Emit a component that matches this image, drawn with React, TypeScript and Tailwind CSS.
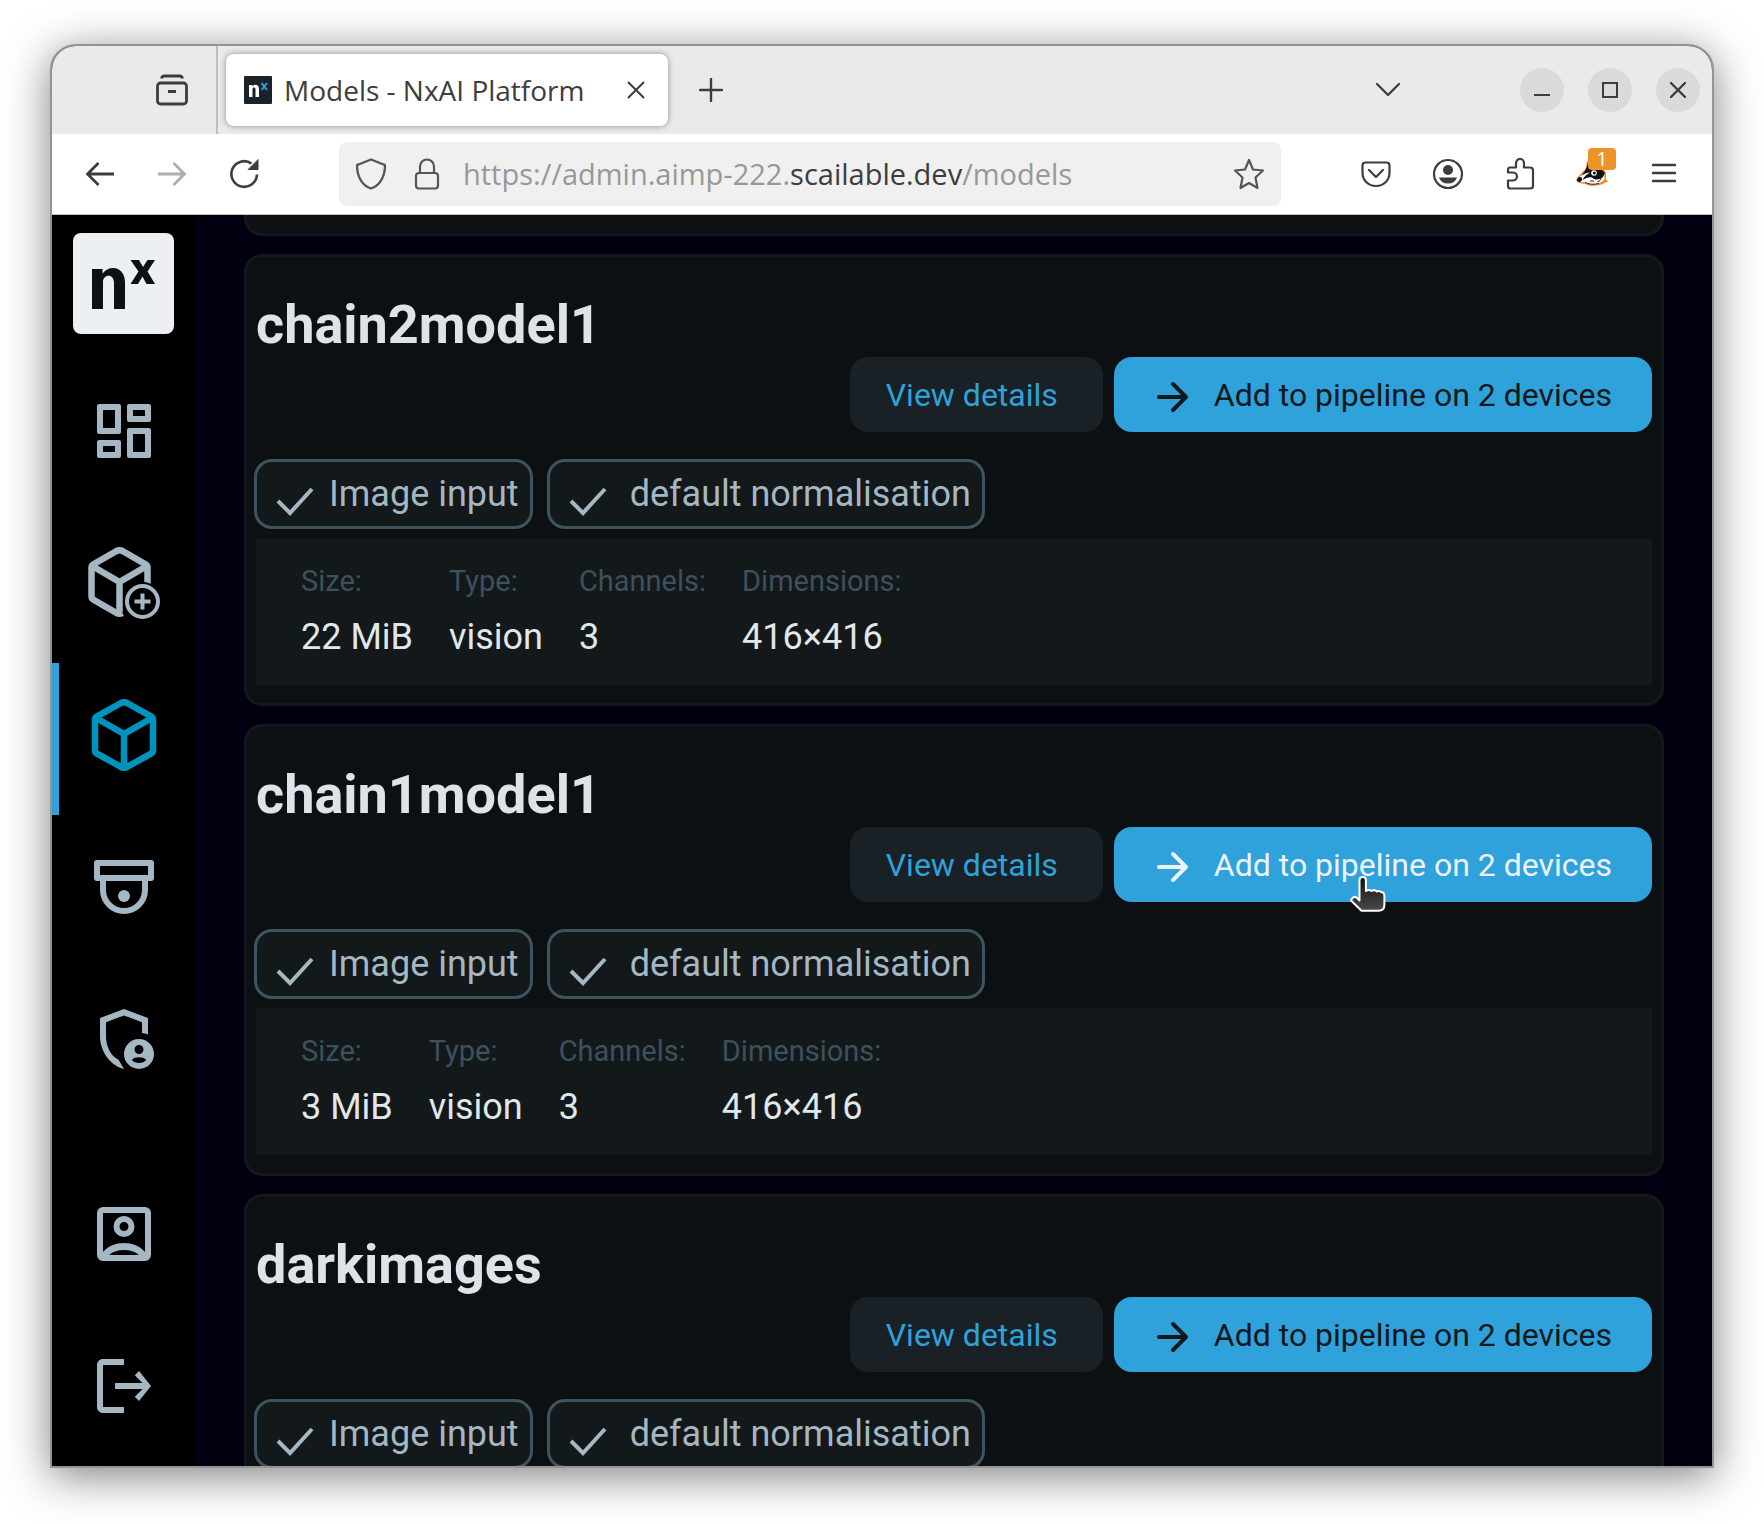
import React from "react";

type Model = { name: string; stats?: { label: string; value: string }[]; hovered?: boolean };

const models: Model[] = [
  {
    name: "chain2model1",
    stats: [
      { label: "Size", value: "22 MiB" },
      { label: "Type", value: "vision" },
      { label: "Channels", value: "3" },
      { label: "Dimensions", value: "416×416" },
    ],
  },
  {
    name: "chain1model1",
    hovered: true,
    stats: [
      { label: "Size", value: "3 MiB" },
      { label: "Type", value: "vision" },
      { label: "Channels", value: "3" },
      { label: "Dimensions", value: "416×416" },
    ],
  },
  { name: "darkimages" },
];

type IconProps = { className?: string; children: React.ReactNode; box?: string };

const Line = ({ className = "size-8", children, box = "0 0 32 32" }: IconProps) => (
  <svg viewBox={box} className={className} fill="none" stroke="currentColor" strokeWidth={2.2} strokeLinecap="round" strokeLinejoin="round" aria-hidden="true">
    {children}
  </svg>
);

const Solid = ({ className = "size-[72px]", children, box = "0 0 24 24" }: IconProps) => (
  <svg viewBox={box} className={className} fill="currentColor" aria-hidden="true">
    {children}
  </svg>
);

const Favicon = () => (
  <svg viewBox="0 0 28 28" className="size-7 shrink-0" aria-hidden="true">
    <rect width="28" height="28" rx="1" fill="#1a232a" />
    <path d="M5 21V9h3.500v1.500C10.500 7.500 15 8.500 15 12.500V21h-3.500v-7.800c0-2.200-3-2.200-3 0V21z" fill="#fff" />
    <path d="M17.500 7l5.500 7M23 7l-5.500 7" stroke="#2fa2db" strokeWidth="2" />
  </svg>
);

const TabStrip = () => (
  <header className="flex h-[88px] shrink-0 bg-[#eaeaea] text-[#3d3d3d]">
    <div className="flex w-[166px] items-center justify-end border-r-2 border-[#bfbfbf] pr-7">
      <button aria-label="Recent windows" className="flex">
        <Line className="size-8">
          <rect x="1.500" y="9" width="29" height="21" rx="3" strokeWidth={2.800} />
          <path d="M5.500 4.500q.5-2.500 3-2.500h15q2.500 0 3 2.500M12 17.500h8" strokeWidth={2.800} strokeLinecap="butt" />
        </Line>
      </button>
    </div>
    <div className="my-2 ml-2 flex w-[442px] items-center rounded-lg bg-white pl-[18px] shadow-[0_0_6px_rgba(0,0,0,0.4)]">
      <Favicon />
      <span className="ml-3 grow whitespace-nowrap text-[28px]">Models - NxAI Platform</span>
      <button aria-label="Close tab" className="mr-[22px] flex">
        <Line className="size-5" box="0 0 20 20"><path d="M2.500 2.500l15 15M17.500 2.500l-15 15" strokeWidth={2} /></Line>
      </button>
    </div>
    <button aria-label="New tab" className="ml-[31px] flex items-center">
      <Line className="size-6" box="0 0 24 24"><path d="M1 12h22M12 1v22" strokeWidth={2.400} /></Line>
    </button>
    <div className="ml-auto flex items-center pr-3">
      <button aria-label="List all tabs" className="mr-[120px] flex">
        <Line className="size-6" box="0 0 24 24"><path d="M1 6l11 11L23 6" strokeWidth={2.300} /></Line>
      </button>
      <div className="flex gap-6">
        <button aria-label="Minimize" className="flex size-11 items-center justify-center rounded-full bg-[#dadada]">
          <Line className="size-4" box="0 0 16 16"><path d="M0 13h16" strokeWidth={2} strokeLinecap="butt" /></Line>
        </button>
        <button aria-label="Maximize" className="flex size-11 items-center justify-center rounded-full bg-[#dadada]">
          <Line className="size-4" box="0 0 16 16"><path d="M1 1h14v14H1z" strokeWidth={2} strokeLinejoin="miter" /></Line>
        </button>
        <button aria-label="Close window" className="flex size-11 items-center justify-center rounded-full bg-[#dadada]">
          <Line className="size-4" box="0 0 16 16"><path d="M1 1l14 14M15 1L1 15" strokeWidth={2.400} /></Line>
        </button>
      </div>
    </div>
  </header>
);

const Badger = () => (
  <svg viewBox="0 0 32 26" className="h-[26px] w-8 shrink-0" aria-hidden="true">
    <path d="M0 20C3 15 8 11 10 8L11 1l6 3 9 3 4 6v6l2 3-3 .5C25 26 14 27 9 24l-6-1z" fill="#f28a1e" />
    <path d="M1.500 20C5 14.500 10 12 12 7l1-4 10 5 5.500 6v5C25 25 14 25.500 9 22.500l-6-1z" fill="#fff" />
    <path d="M5 15.500C9 12 11 8 12 2.500L16 7c5 0 10 2 13 6l-2 4c-3 3-8 3.500-11 .500-3-1-6 .500-9.500 2.500 2-4 5-6 7.500-7.500C11 12.500 8 14 5 15.500z" fill="#111" />
    <path d="M1.500 18.500c1-2 4-2 4.500 0s-1 3.500-3 3.500-2.500-2-1.500-3.500z" fill="#111" />
    <circle cx="18" cy="13" r="2.800" fill="#fff" />
    <circle cx="18.300" cy="13" r="1.500" fill="#111" />
    <path d="M9 22c3 2.500 10 3 14 1M25 18c0 2-1.500 3.500-3.500 3.500M14 21h4" stroke="#222" strokeWidth="1" fill="none" />
  </svg>
);

const Toolbar = () => (
  <nav className="flex h-[81px] shrink-0 items-center border-b border-[#c4c4c4] bg-white text-[#3d3d3d]">
    <div className="flex w-[287px] items-center gap-10 pl-8">
      <button aria-label="Back" className="flex">
        <Line><path d="M30 16H3M14.500 5L3.500 16l11 11" strokeWidth={2.800} strokeLinecap="butt" strokeLinejoin="miter" /></Line>
      </button>
      <button aria-label="Forward" className="flex text-[#adadad]">
        <Line><path d="M2 16h27M17.500 5l11 11-11 11" strokeWidth={2.800} strokeLinecap="butt" strokeLinejoin="miter" /></Line>
      </button>
      <button aria-label="Reload" className="flex">
        <Line>
          <path d="M29 16.500A12.800 12.800 0 1 1 23.500 5.500" strokeWidth={2.600} strokeLinecap="butt" />
          <path d="M30 2v9.500h-9.500z" fill="currentColor" stroke="currentColor" strokeWidth={1} />
        </Line>
      </button>
    </div>
    <div className="flex h-16 grow items-center rounded-lg bg-[#f0f0f0] pl-4 pr-4 text-[#555]">
      <Line><path d="M16 1.500l12.500 5c1 0 1.500 1 1.500 2C29.500 20 24 28 16 30.500 8 28 2.500 20 2 8.500c0-1 .500-2 1.500-2z" strokeWidth={2.300} /></Line>
      <Line className="ml-6 size-8">
        <rect x="5" y="15" width="22" height="15.500" rx="3" />
        <path d="M9 15V8.500a7 7 0 0 1 14 0V15" />
      </Line>
      <div className="relative ml-5 grow whitespace-nowrap text-[29px] text-[#989898]">
        https://admin.aimp-222.<span className="text-[#3d3d3d]">scailable.dev</span>/models
        <input type="url" aria-label="Address" className="absolute inset-0 bg-transparent" />
      </div>
      <button aria-label="Bookmark" className="flex">
        <Line><path d="M16 2l4 9.500 10 1-7.500 7 2 10.500L16 25l-8.500 5 2-10.500L2 12.500l10-1z" /></Line>
      </button>
    </div>
    <div className="ml-[79px] mr-8 flex items-center gap-10">
      <button aria-label="Pocket" className="flex">
        <Line><path d="M5.500 4.500h21q3 0 3 3V15a13.500 13 0 0 1-27 0V7.500q0-3 3-3zM9 12l7 7 7-7" /></Line>
      </button>
      <button aria-label="Account" className="flex">
        <Line>
          <circle cx="16" cy="16" r="14" />
          <circle cx="16" cy="12" r="5" fill="currentColor" stroke="none" />
          <path d="M7 19.500h18q-2 6-9 6t-9-6z" fill="currentColor" stroke="none" />
        </Line>
      </button>
      <button aria-label="Extensions" className="flex">
        <Line><path d="M6 9.500h6V5a4 4 0 0 1 8 0v4.500h6q3 0 3 3V28q0 2.500-3 2.500H6.500q-2.500 0-2.500-2.500v-5.500h4.500a4.500 4 0 0 0 0-8H4v-2.500q0-2.500 2-2.500z" /></Line>
      </button>
      <button aria-label="Privacy Badger, 1 tracker" className="relative flex h-8 items-end pb-1">
        <Badger />
        <span className="absolute -top-2.5 left-3 flex h-[22px] w-7 items-center justify-center rounded-sm bg-[#ed9428] text-[20px] leading-5 text-white">1</span>
      </button>
      <button aria-label="Menu" className="flex">
        <Line><path d="M5 7h22M5 15h22M5 23h22" strokeWidth={2.400} /></Line>
      </button>
    </div>
  </nav>
);

const navItem = "relative flex h-[152px] w-full shrink-0 items-center justify-center pb-2";

const Sidebar = () => (
  <aside className="flex w-36 shrink-0 flex-col bg-black pt-[18px] text-[#a4b7c2]">
    <a href="#home" aria-label="nx" className="mb-[25px] ml-[21px] flex size-[101px] shrink-0 items-center justify-center rounded-lg bg-[#ecf0f3]">
      <svg viewBox="0 0 101 101" className="size-full" fill="#0d1114" aria-hidden="true">
        <path d="M19 76V36h10.500v4.500C36 31 52 33.500 52 49v27H41V50c0-10-11-9-11-1v27z" />
        <path d="M57.500 27H66l4 7 4.500-7H82l-7.500 11.500L82 51h-8.500L69.500 43.500 65 51h-7.500l8-12.500z" />
      </svg>
    </a>
    <a href="#dashboard" aria-label="Dashboard" className={navItem}>
      <Solid><path d="M19 5v2h-4V5h4M9 5v6H5V5h4m10 8v6h-4v-6h4M9 17v2H5v-2h4M20.300 3h-6.600q-.7 0-.7.700v4.600q0 .7.700.7h6.600q.7 0 .7-.7V3.700q0-.7-.7-.7zM10.300 3H3.700Q3 3 3 3.700v8.600q0 .7.700.7h6.600q.7 0 .7-.7V3.700q0-.7-.7-.7zm10 8h-6.600q-.7 0-.7.700v8.600q0 .7.700.7h6.600q.7 0 .7-.7v-8.600q0-.7-.7-.7zm-10 4H3.700q-.7 0-.7.700v4.600q0 .7.700.7h6.600q.7 0 .7-.7v-4.600q0-.7-.7-.7z" fillRule="evenodd" /></Solid>
    </a>
    <a href="#add-model" aria-label="Add model" className={navItem}>
      <Line className="size-[72px]" box="0 0 72 72">
        <path d="M59.500 37V20.500q0-2-2-3.200L34.500 4q-3-1.500-6 0L5.500 17.300q-2 1.200-2 3.200v29q0 2 2 3.200L28.500 66q3 1.500 6 0M5 19.500L31.500 35 58 19.500M31.500 35v30" strokeWidth={6.500} strokeLinecap="butt" />
        <circle cx="54.500" cy="54.500" r="19.500" fill="#000" stroke="none" />
        <circle cx="54.500" cy="54.500" r="15.500" strokeWidth={4} />
        <path d="M54.500 46.500v16M46.500 54.500h16" strokeWidth={4} strokeLinecap="butt" />
      </Line>
    </a>
    <a href="#models" aria-label="Models" aria-current="page" className="relative flex h-[152px] w-full shrink-0 items-center justify-center pb-2 text-[#0093bd]">
      <span className="absolute inset-y-0 left-0 w-[7px] bg-[#2fa2db]" />
      <Line className="size-[72px]" box="0 0 72 72">
        <path d="M65 20.500v31q0 2-2 3.200L39 68q-3 1.500-6 0L9 54.700q-2-1.200-2-3.200v-31q0-2 2-3.200L33 4q3-1.500 6 0l24 13.300q2 1.200 2 3.200zM9 19.500L36 35l27-15.500M36 35v32" strokeWidth={6.500} />
      </Line>
    </a>
    <a href="#devices" aria-label="Devices" className={navItem}>
      <Solid>
        <path d="M21 3H3q-1 0-1 1v5q0 1 1 1h1v3a8 8 0 0 0 16 0v-3h1q1 0 1-1V4q0-1-1-1zM4 5h16v3H4zm14 8a6 6 0 0 1-12 0v-3h12z" fillRule="evenodd" />
        <circle cx="12" cy="15" r="2" />
      </Solid>
    </a>
    <a href="#admin" aria-label="Administration" className={navItem}>
      <Solid>
        <path d="M12 2L4 5v6.090c0 5.050 3.410 9.760 8 10.910l-1.800-3.100C7.600 17.700 6 14.500 6 11.090V6.390l6-2.250 6 2.250v3.610q1 .1 2 .500V5z" />
        <path d="M17 12a5 5 0 1 0 0 10 5 5 0 0 0 0-10zm0 2a1.500 1.500 0 1 1 0 3 1.500 1.500 0 0 1 0-3zm0 6c-1 0-1.900-.400-2.400-1.100.9-1.100 3.900-1.100 4.800 0-.5.700-1.400 1.100-2.400 1.100z" fillRule="evenodd" />
      </Solid>
    </a>
    <div className="mt-auto w-full">
      <a href="#account" aria-label="Account" className={navItem}>
        <Solid>
          <path d="M19 3H5a2 2 0 0 0-2 2v14a2 2 0 0 0 2 2h14a2 2 0 0 0 2-2V5a2 2 0 0 0-2-2zM7 19c2.500-2.200 7.500-2.200 10 0zm12-1c-3.300-4-10.700-4-14 0V5h14z" fillRule="evenodd" />
          <path d="M12 6a3.500 3.500 0 1 0 0 7 3.500 3.500 0 0 0 0-7zm0 2a1.500 1.500 0 1 1 0 3 1.500 1.500 0 0 1 0-3z" fillRule="evenodd" />
        </Solid>
      </a>
      <a href="#logout" aria-label="Log out" className={navItem}>
        <Solid><path d="M17 7l-1.410 1.410L18.170 11H9v2h9.170l-2.580 2.580L17 17l4-5zM5 5h7V3H5c-1.100 0-2 .9-2 2v14c0 1.100.9 2 2 2h7v-2H5V5z" /></Solid>
      </a>
    </div>
  </aside>
);

const Chip = ({ label, wide }: { label: string; wide?: boolean }) => (
  <li className="flex h-[70px] items-center rounded-[18px] border-[3px] border-[#3f535f] bg-[#13181b] pl-[17px] pr-[11px] text-[36px] text-[#a4b7c2]">
    <svg viewBox="0 0 42 42" className={wide ? "mr-[21px] mt-4 size-[42px]" : "mr-[13px] mt-4 size-[42px]"} fill="none" stroke="currentColor" strokeWidth={4} aria-hidden="true">
      <path d="M4 20l12 12L38 8" />
    </svg>
    {label}
  </li>
);

const Stat = ({ label, value }: { label: string; value: string }) => (
  <div>
    <dt className="text-[29px] leading-[34px] text-[#3d505b]">{label}:</dt>
    <dd className="mt-[18px] text-[36px] leading-[42px] text-[#e1e7ea]">{value}</dd>
  </div>
);

const Pointer = () => (
  <svg viewBox="0 0 36 36" className="absolute left-[236px] top-[49px] size-9" aria-hidden="true">
    <defs>
      <linearGradient id="hand" x1="0" y1="0" x2="0" y2="1">
        <stop offset="0" stopColor="#111" />
        <stop offset="1" stopColor="#4a4a4a" />
      </linearGradient>
    </defs>
    <path d="M9.500 4q0-3 3.200-3t3.200 3v11q3-2 5.500 0 3-2 5.500.500 3-1.500 4.500.800 3-.500 3 4v8.500q0 6-6 6H11.500L1.500 25q-1-1 1-3t4-.500l3 3z" fill="url(#hand)" stroke="#fff" strokeWidth="2" strokeLinejoin="round" />
  </svg>
);

const ModelCard = ({ model }: { model: Model }) => (
  <article className="min-h-[452px] shrink-0 rounded-[18px] border-[3px] border-[#13181b] bg-[#0c1013] px-[9px] pb-[18px] pt-9">
    <h2 className="text-[54px] font-bold leading-[64px] text-[#dde3e8]">{model.name}</h2>
    <div className="flex justify-end gap-[11px] text-[32px]">
      <button className="h-[75px] rounded-[18px] bg-[#192026] pl-9 pr-[45px] text-[#2fa2db]">View details</button>
      <button className={model.hovered ? "relative flex h-[75px] items-center rounded-[18px] bg-[#2fa2db] pl-10 pr-10 text-[#ecf3fb]" : "relative flex h-[75px] items-center rounded-[18px] bg-[#2fa2db] pl-10 pr-10 text-[#13181b]"}>
        <svg viewBox="0 0 36 36" className="mr-6 mt-1 size-9" fill="none" stroke="currentColor" strokeWidth={4} strokeLinecap="round" strokeLinejoin="round" aria-hidden="true">
          <path d="M5 18h27M19 5l13 13-13 13" />
        </svg>
        Add to pipeline on 2 devices
        {model.hovered && <Pointer />}
      </button>
    </div>
    <ul className="-ml-[2px] mt-[27px] flex gap-[14px]">
      <Chip label="Image input" />
      <Chip label="default normalisation" wide />
    </ul>
    {model.stats && (
      <dl className="mt-[9px] flex h-[147px] gap-9 bg-[#13181b] px-[45px] pt-[26px]">
        {model.stats.map((s) => (
          <Stat key={s.label} label={s.label} value={s.value} />
        ))}
      </dl>
    )}
  </article>
);

export default function App() {
  return (
    <div className="h-screen bg-white px-[50px] pb-14 pt-11 font-['Open_Sans',sans-serif]">
      <div className="flex h-full flex-col overflow-hidden rounded-t-[26px] border-2 border-[#949494] bg-[#020010] shadow-[0_8px_44px_rgba(0,0,0,0.5)]">
        <TabStrip />
        <Toolbar />
        <div className="flex min-h-0 grow font-[Roboto,sans-serif]">
          <Sidebar />
          <main className="flex min-w-0 grow flex-col gap-[18px] overflow-hidden px-12">
            <div className="h-[21px] shrink-0 rounded-b-[18px] border-[3px] border-t-0 border-[#13181b] bg-[#0c1013]" />
            {models.map((m) => (
              <ModelCard key={m.name} model={m} />
            ))}
          </main>
        </div>
      </div>
    </div>
  );
}
